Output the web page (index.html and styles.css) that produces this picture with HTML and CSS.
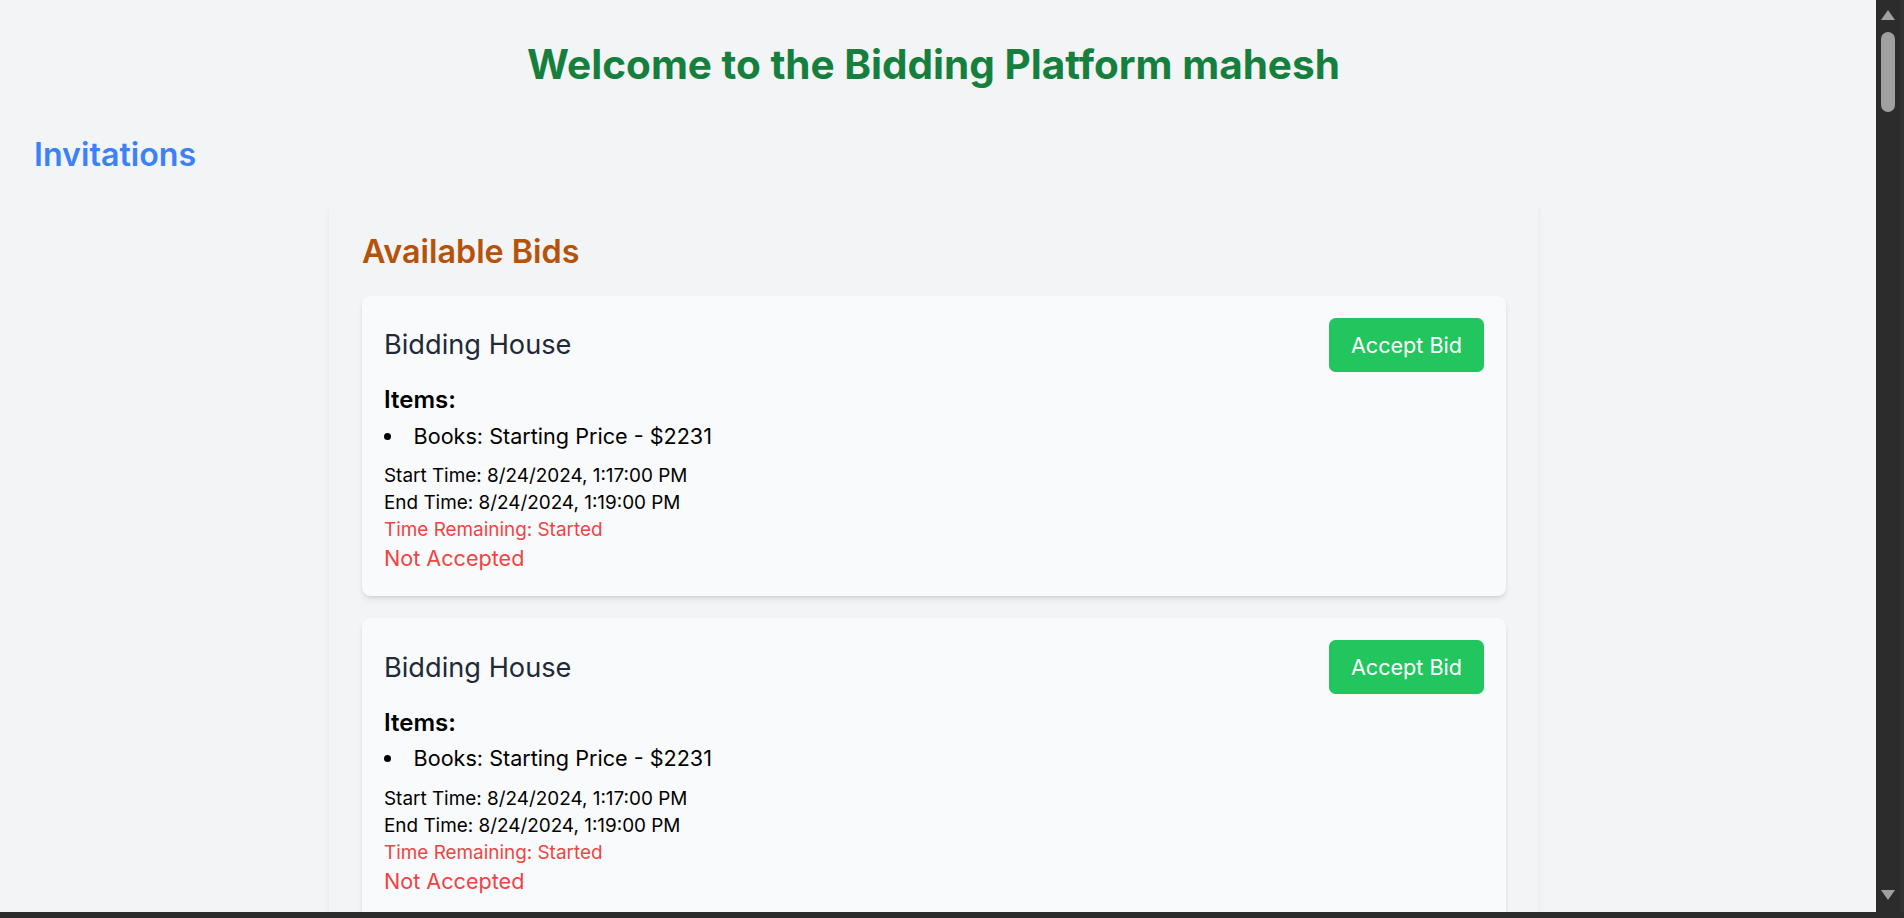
FILE: index.html
```html
<!DOCTYPE html>
<html lang="en">
<head>
<meta charset="utf-8">
<title>Bidding Platform</title>
<link rel="stylesheet" href="styles.css">
</head>
<body>
<div class="window">
  <div class="viewport">
    <main class="page">
      <h1 class="welcome">Welcome to the Bidding Platform mahesh</h1>
      <h2 class="invitations">Invitations</h2>
      <section class="panel">
        <h2 class="panel-title">Available Bids</h2>

        <article class="bid">
          <div class="bid-head">
            <h3 class="bid-name">Bidding House</h3>
            <button class="accept">Accept Bid</button>
          </div>
          <h4 class="items-label">Items:</h4>
          <ul class="items">
            <li>Books: Starting Price - $2231</li>
          </ul>
          <p class="time">Start Time: 8/24/2024, 1:17:00 PM</p>
          <p class="time">End Time: 8/24/2024, 1:19:00 PM</p>
          <p class="remaining">Time Remaining: Started</p>
          <p class="status">Not Accepted</p>
        </article>

        <article class="bid">
          <div class="bid-head">
            <h3 class="bid-name">Bidding House</h3>
            <button class="accept">Accept Bid</button>
          </div>
          <h4 class="items-label">Items:</h4>
          <ul class="items">
            <li>Books: Starting Price - $2231</li>
          </ul>
          <p class="time">Start Time: 8/24/2024, 1:17:00 PM</p>
          <p class="time">End Time: 8/24/2024, 1:19:00 PM</p>
          <p class="remaining">Time Remaining: Started</p>
          <p class="status">Not Accepted</p>
        </article>
      </section>
    </main>
    <div class="scrollbar">
      <span class="arrow-up"></span>
      <span class="thumb"></span>
      <span class="track-fill"></span>
      <span class="arrow-down"></span>
    </div>
  </div>
  <div class="hbar"></div>
</div>
</body>
</html>
```

FILE: styles.css
```css
* { box-sizing: border-box; }

html, body {
  margin: 0;
  padding: 0;
  height: 918px;
  overflow: hidden;
  background: #2c2c2c;
  font-family: Inter, "Noto Sans", sans-serif;
}

.window {
  display: flex;
  flex-direction: column;
  width: 1904px;
  height: 918px;
}

.viewport {
  display: flex;
  height: 912px;
}

.page {
  flex: 1;
  height: 912px;
  overflow: hidden;
  background: #f3f4f6;
  padding: 43px 9px 0 0;
}

.welcome {
  margin: 0;
  text-align: center;
  font-size: 40.5px;
  line-height: 44px;
  font-weight: 700;
  color: #15803d;
}

.invitations {
  margin: 49px 0 0 0;
  padding-left: 34px;
  font-size: 32.2px;
  line-height: 38px;
  font-weight: 600;
  color: #3b82f6;
}

.panel {
  width: 1209px;
  margin: 25px auto 0;
  background: #f3f4f6;
  border-radius: 9px;
  box-shadow: 0 4px 8px -2px rgba(0, 0, 0, 0.08), 0 2px 4px -2px rgba(0, 0, 0, 0.05);
  padding: 33px 32px 33px 33px;
}

.panel-title {
  margin: 0 0 24px 0;
  font-size: 32.3px;
  line-height: 39.6px;
  font-weight: 600;
  color: #b45309;
}

.bid {
  background: #f9fafb;
  border-radius: 8.8px;
  box-shadow: 0 4px 6px -1px rgba(0, 0, 0, 0.1), 0 2px 4px -2px rgba(0, 0, 0, 0.1);
  padding: 22px;
  margin-bottom: 22px;
}

.bid-head {
  display: flex;
  justify-content: space-between;
  align-items: center;
}

.bid-name {
  margin: 0;
  font-size: 27.2px;
  line-height: 33px;
  font-weight: 400;
  color: #1f2937;
}

.accept {
  height: 54px;
  padding: 0 22px;
  border: none;
  border-radius: 6.6px;
  background: #22c55e;
  color: #ffffff;
  font-family: Inter, "Noto Sans", sans-serif;
  font-size: 21.6px;
  font-weight: 400;
}

.items-label {
  margin: 12.4px 0 0 0;
  font-size: 24px;
  line-height: 32px;
  font-weight: 600;
  color: #000000;
}

.items {
  margin: 4.8px 0 11.4px 0;
  padding: 0;
  list-style: disc inside;
  font-size: 21.6px;
  line-height: 30px;
  color: #000000;
}

.time {
  margin: 0;
  font-size: 18.9px;
  line-height: 27px;
  color: #000000;
}

.remaining {
  margin: 0;
  font-size: 18.9px;
  line-height: 27px;
  color: #ef4444;
}

.status {
  margin: 0;
  font-size: 21.6px;
  line-height: 31px;
  color: #ef4444;
}

.scrollbar {
  width: 28px;
  height: 912px;
  background: #2c2c2c;
  display: flex;
  flex-direction: column;
  align-items: flex-start;
  padding: 10px 0 12px 5px;
  border-right: 4px solid #333333;
}

.arrow-up {
  width: 0;
  height: 0;
  border-left: 7px solid transparent;
  border-right: 7px solid transparent;
  border-bottom: 10px solid #a0a0a0;
}

.thumb {
  width: 14px;
  height: 80px;
  margin-top: 12px;
  border-radius: 7px;
  background: #9f9f9f;
}

.track-fill {
  flex: 1;
}

.arrow-down {
  width: 0;
  height: 0;
  border-left: 7px solid transparent;
  border-right: 7px solid transparent;
  border-top: 10px solid #a0a0a0;
}

.hbar {
  height: 6px;
  background: #2c2c2c;
}
```
